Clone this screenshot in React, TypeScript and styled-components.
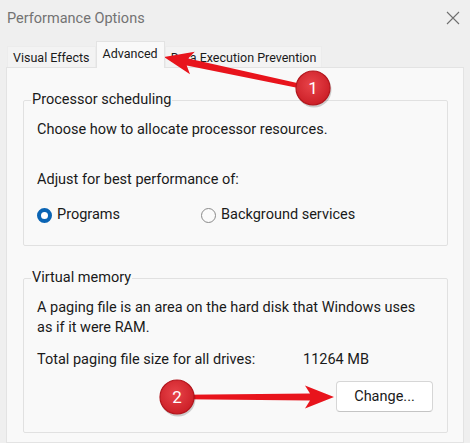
import styled, { createGlobalStyle } from 'styled-components'

const GlobalStyle = createGlobalStyle`
  html, body {
    margin: 0;
    padding: 0;
    background: #efefef;
  }
  body {
    font-family: Roboto, "Liberation Sans", sans-serif;
    color: #1a1a1a;
  }
`

const textSize = '14.5px'

const Window = styled.div`
  position: relative;
  width: 470px;
  height: 443px;
  overflow: hidden;
  background: #efefef;
  display: flex;
  flex-direction: column;
`

const TitleBar = styled.div`
  flex: none;
  height: 36px;
  display: flex;
  align-items: center;
  justify-content: space-between;
  padding: 0 10px 0 7px;
`

const Title = styled.span`
  font-size: 14.5px;
  color: #737373;
`

const TabStrip = styled.div`
  flex: none;
  display: flex;
  align-items: flex-end;
  height: 31px;
  padding-left: 7px;
`

const Tab = styled.div<{ $active?: boolean }>`
  height: ${({ $active }) => ($active ? '23px' : '20px')};
  padding: ${({ $active }) => ($active ? '0 6px 3px' : '0 5px')};
  display: flex;
  align-items: center;
  font-size: 12.5px;
  background: ${({ $active }) => ($active ? '#f9f9f9' : '#f3f3f3')};
  border: 1px solid ${({ $active }) => ($active ? '#e3e3e3' : '#ececec')};
  border-bottom: 0;
  margin-bottom: ${({ $active }) => ($active ? '-1px' : '0')};
  position: relative;
  z-index: ${({ $active }) => ($active ? 1 : 0)};
`

const TabPanel = styled.div`
  flex: 1;
  margin: 0 6px;
  background: #f9f9f9;
  border: 1px solid #e3e3e3;
  padding: 22px 15px 0 16px;
  display: flex;
  flex-direction: column;
  gap: 22px;
`

const Group = styled.fieldset`
  margin: 0;
  border: 1px solid #e1e1e1;
  border-radius: 2px;
  padding: 10px 14px 20px 13px;
  display: flex;
  flex-direction: column;
`

const Legend = styled.legend`
  font-size: 14.5px;
  line-height: 20px;
  padding: 0 1px;
  margin-left: -6px;
  color: #1a1a1a;
`

const Line = styled.div<{ $gap?: number }>`
  font-size: ${textSize};
  line-height: 20px;
  white-space: nowrap;
  margin-top: ${({ $gap }) => $gap ?? 0}px;
`

const RadioRow = styled.div`
  display: grid;
  grid-template-columns: 164px auto;
  margin-top: 15px;
  height: 20px;
`

const RadioLabel = styled.label`
  display: flex;
  align-items: center;
  gap: 5px;
  font-size: ${textSize};
  line-height: 20px;
`

const RadioDot = styled.span<{ $checked?: boolean }>`
  width: 15px;
  height: 15px;
  box-sizing: border-box;
  border-radius: 50%;
  flex: none;
  background: ${({ $checked }) => ($checked ? '#ffffff' : '#fbfbfb')};
  border: ${({ $checked }) => ($checked ? '4.5px solid #0a64b4' : '1px solid #8a8a8a')};
`

const InfoRow = styled.div`
  display: grid;
  grid-template-columns: 266px auto;
  font-size: ${textSize};
  line-height: 20px;
  margin-top: 12px;
`

const ButtonRow = styled.div`
  display: flex;
  justify-content: flex-end;
  margin-top: 11px;
  margin-bottom: 0;
`

const Button = styled.button`
  width: 97px;
  height: 31px;
  font-family: inherit;
  font-size: ${textSize};
  color: #1a1a1a;
  background: #ffffff;
  border: 1px solid #d6d6d6;
  border-bottom-color: #c4c4c4;
  border-radius: 4px;
`

const Overlay = styled.svg`
  position: absolute;
  left: 0;
  top: 0;
  pointer-events: none;
`

type Pt = [number, number]

function arrowPoints(tail: Pt, tip: Pt) {
  const dx = tip[0] - tail[0]
  const dy = tip[1] - tail[1]
  const len = Math.hypot(dx, dy)
  const ux = dx / len
  const uy = dy / len
  const nx = -uy
  const ny = ux
  const headLen = 29
  const headHalf = 11.5
  const neckHalf = 3.6
  const tailHalf = 2.2
  const bx = tip[0] - ux * headLen
  const by = tip[1] - uy * headLen
  const nkx = bx + ux * 5
  const nky = by + uy * 5
  const p = (x: number, y: number) => `${x.toFixed(1)},${y.toFixed(1)}`
  return [
    p(tip[0], tip[1]),
    p(bx + nx * headHalf, by + ny * headHalf),
    p(nkx + nx * neckHalf, nky + ny * neckHalf),
    p(tail[0] + nx * tailHalf, tail[1] + ny * tailHalf),
    p(tail[0] - nx * tailHalf, tail[1] - ny * tailHalf),
    p(nkx - nx * neckHalf, nky - ny * neckHalf),
    p(bx - nx * headHalf, by - ny * headHalf),
  ].join(' ')
}

function Badge({ x, y, n }: { x: number; y: number; n: string }) {
  return (
    <g>
      <circle cx={x + 1} cy={y + 2} r={17.5} fill="rgba(0,0,0,0.18)" />
      <circle cx={x} cy={y} r={17} fill="url(#badgeFill)" stroke="#b3161d" strokeWidth={1.2} />
      <text
        x={x}
        y={y + 6}
        textAnchor="middle"
        fontSize="17"
        fontFamily="Roboto, sans-serif"
        fill="#ffffff"
      >
        {n}
      </text>
    </g>
  )
}

function Annotations() {
  return (
    <Overlay width={470} height={443} viewBox="0 0 470 443">
      <defs>
        <radialGradient id="badgeFill" cx="45%" cy="40%" r="60%">
          <stop offset="0%" stopColor="#e8444a" />
          <stop offset="100%" stopColor="#cc1f27" />
        </radialGradient>
      </defs>
      <polygon points={arrowPoints([300, 86], [164, 57])} fill="#e8141c" />
      <polygon points={arrowPoints([185, 397], [334, 397])} fill="#e8141c" />
      <Badge x={313} y={88} n="1" />
      <Badge x={177} y={397} n="2" />
    </Overlay>
  )
}

function CloseIcon() {
  return (
    <svg width={14} height={14} viewBox="0 0 14 14">
      <path d="M1 1 L13 13 M13 1 L1 13" stroke="#6f6f6f" strokeWidth={1.1} />
    </svg>
  )
}

export default function App() {
  return (
    <>
      <GlobalStyle />
      <Window>
        <TitleBar>
          <Title>Performance Options</Title>
          <CloseIcon />
        </TitleBar>
        <TabStrip>
          <Tab>Visual Effects</Tab>
          <Tab $active>Advanced</Tab>
          <Tab>Data Execution Prevention</Tab>
        </TabStrip>
        <TabPanel>
          <Group>
            <Legend>Processor scheduling</Legend>
            <Line>Choose how to allocate processor resources.</Line>
            <Line $gap={30}>Adjust for best performance of:</Line>
            <RadioRow>
              <RadioLabel>
                <RadioDot $checked />
                Programs
              </RadioLabel>
              <RadioLabel>
                <RadioDot />
                Background services
              </RadioLabel>
            </RadioRow>
          </Group>
          <Group>
            <Legend>Virtual memory</Legend>
            <Line>A paging file is an area on the hard disk that Windows uses</Line>
            <Line>as if it were RAM.</Line>
            <InfoRow>
              <span>Total paging file size for all drives:</span>
              <span>11264 MB</span>
            </InfoRow>
            <ButtonRow>
              <Button>Change...</Button>
            </ButtonRow>
          </Group>
        </TabPanel>
        <Annotations />
      </Window>
    </>
  )
}
